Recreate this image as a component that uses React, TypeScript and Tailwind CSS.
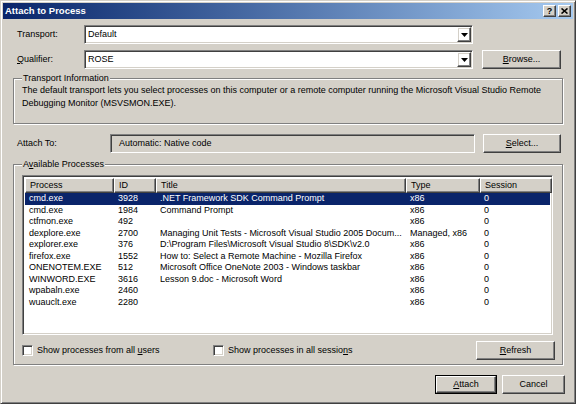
import * as React from "react";

const raised =
  "border border-t-white border-l-white border-r-[#404040] border-b-[#404040] shadow-[inset_-1px_-1px_0_#808080,inset_1px_1px_0_#d4d0c8]";
const sunken =
  "border border-t-[#808080] border-l-[#808080] border-r-white border-b-white shadow-[inset_1px_1px_0_#404040,inset_-1px_-1px_0_#d4d0c8]";
const groupBox =
  "border border-[#808080] shadow-[inset_1px_1px_0_#fff,1px_1px_0_#fff]";

type Proc = {name: string; id: string; title: string; type: string; session: string};

const processes: Proc[] = [
  {name: "cmd.exe", id: "3928", title: ".NET Framework SDK Command Prompt", type: "x86", session: "0"},
  {name: "cmd.exe", id: "1984", title: "Command Prompt", type: "x86", session: "0"},
  {name: "ctfmon.exe", id: "492", title: "", type: "x86", session: "0"},
  {name: "dexplore.exe", id: "2700", title: "Managing Unit Tests - Microsoft Visual Studio 2005 Docum...", type: "Managed, x86", session: "0"},
  {name: "explorer.exe", id: "376", title: "D:\\Program Files\\Microsoft Visual Studio 8\\SDK\\v2.0", type: "x86", session: "0"},
  {name: "firefox.exe", id: "1552", title: "How to: Select a Remote Machine - Mozilla Firefox", type: "x86", session: "0"},
  {name: "ONENOTEM.EXE", id: "512", title: "Microsoft Office OneNote 2003 - Windows taskbar", type: "x86", session: "0"},
  {name: "WINWORD.EXE", id: "3616", title: "Lesson 9.doc - Microsoft Word", type: "x86", session: "0"},
  {name: "wpabaln.exe", id: "2460", title: "", type: "x86", session: "0"},
  {name: "wuauclt.exe", id: "2280", title: "", type: "x86", session: "0"},
];

const cols = "grid grid-cols-[89px_42px_250px_74px_72px]";

function Button({children, className = "", isDefault = false}: {children: React.ReactNode; className?: string; isDefault?: boolean}) {
  const inner = (
    <div className={`${raised} flex h-full w-full items-center justify-center`}>{children}</div>
  );
  if (isDefault) {
    return <div className={`border border-black ${className}`}>{inner}</div>;
  }
  return <div className={className}>{inner}</div>;
}

function ComboBox({value}: {value: string}) {
  return (
    <div className={`${sunken} flex h-[19px] w-[389px] items-stretch bg-white p-[1px]`}>
      <span className="flex-1 truncate pl-[2px] leading-[15px]">{value}</span>
      <div className={`${raised} flex w-[14px] items-center justify-center`}>
        <svg width="7" height="4" viewBox="0 0 7 4">
          <path d="M0 0h7L3.5 4z" fill="#000" />
        </svg>
      </div>
    </div>
  );
}

function Checkbox({label}: {label: React.ReactNode}) {
  return (
    <div className="flex items-center gap-[4px]">
      <div className={`${sunken} h-[11px] w-[11px] bg-white`} />
      <span>{label}</span>
    </div>
  );
}

export default function App() {
  return (
    <div className="h-[404px] w-[576px] bg-[#d4d0c8] font-['Liberation_Sans',Arial,sans-serif] text-[9px] text-black">
      <div className="flex h-full flex-col border border-t-[#d4d0c8] border-l-[#d4d0c8] border-r-[#404040] border-b-[#404040] p-[2px] shadow-[inset_1px_1px_0_#fff,inset_-1px_-1px_0_#808080]">
        {/* title bar */}
        <div className="flex h-[16px] items-center bg-linear-to-r from-[#0a246a] to-[#a6caf0] pl-[2px] pr-[2px]">
          <span className="flex-1 text-[9.5px] font-bold text-white">Attach to Process</span>
          <div className={`${raised} flex h-[12px] w-[13px] items-center justify-center bg-[#d4d0c8] text-[9px] font-bold leading-none`}>?</div>
          <div className={`${raised} ml-[2px] flex h-[12px] w-[13px] items-center justify-center bg-[#d4d0c8]`}>
            <svg width="7" height="6" viewBox="0 0 7 6">
              <path d="M0.5 0.5l6 5M6.5 0.5l-6 5" stroke="#000" strokeWidth="1.6" />
            </svg>
          </div>
        </div>

        {/* transport */}
        <div className="mt-[6px] flex items-center pl-[14px]">
          <span className="w-[67px]">Transport:</span>
          <ComboBox value="Default" />
        </div>
        <div className="mt-[6px] flex items-center pl-[14px]">
          <span className="w-[67px]">
            <u>Q</u>ualifier:
          </span>
          <ComboBox value="ROSE" />
          <Button className="ml-[9px] h-[19px] w-[79px]">
            <span>
              <u>B</u>rowse...
            </span>
          </Button>
        </div>

        <fieldset className={`${groupBox} ml-[10px] mt-[4px] h-[51px] w-[550px] pl-[8px] pr-[4px]`}>
          <legend className="bg-[#d4d0c8] px-[1px] leading-[11px]">Transport Information</legend>
          <p className="leading-[13px]">
            The default transport lets you select processes on this computer or a remote computer running the Microsoft Visual Studio Remote
            Debugging Monitor (MSVSMON.EXE).
          </p>
        </fieldset>

        {/* attach to */}
        <div className="mt-[10px] flex items-center pl-[14px]">
          <span className="w-[93px]">Attach To:</span>
          <div className={`${sunken} flex h-[19px] w-[365px] items-center pl-[8px]`}>Automatic: Native code</div>
          <Button className="ml-[8px] h-[19px] w-[78px]">
            <span>
              <u>S</u>elect...
            </span>
          </Button>
        </div>

        <fieldset className={`${groupBox} ml-[10px] mt-[6px] flex h-[206px] w-[550px] flex-col pl-[8px]`}>
          <legend className="bg-[#d4d0c8] px-[1px] leading-[11px]">
            A<u>v</u>ailable Processes
          </legend>
          <div className={`${sunken} mt-[5px] h-[160px] w-[531px] overflow-hidden bg-white p-[2px]`}>
            <div className={cols}>
              {["Process", "ID", "Title", "Type", "Session"].map((h) => (
                <div key={h} className={`${raised} h-[15px] bg-[#d4d0c8] pl-[4px] leading-[13px]`}>
                  {h}
                </div>
              ))}
            </div>
            {processes.map((p, i) => (
              <div
                key={p.name + p.id}
                className={`${cols} h-[11.5px] leading-[11.5px] ${i === 0 ? "bg-[#0a246a] text-white" : ""}`}
              >
                <span className="truncate pl-[4px]">{p.name}</span>
                <span className="truncate pl-[4px]">{p.id}</span>
                <span className="truncate pl-[4px]">{p.title}</span>
                <span className="truncate pl-[4px]">{p.type}</span>
                <span className="truncate pl-[4px]">{p.session}</span>
              </div>
            ))}
          </div>
          <div className="mt-[6px] flex w-[533px] items-center">
            <div className="w-[191px]">
              <Checkbox
                label={
                  <>
                    Show processes from all <u>u</u>sers
                  </>
                }
              />
            </div>
            <Checkbox
              label={
                <>
                  Show processes in all sessio<u>n</u>s
                </>
              }
            />
            <Button className="ml-auto h-[19px] w-[79px]">
              <span>
                <u>R</u>efresh
              </span>
            </Button>
          </div>
        </fieldset>

        {/* bottom buttons */}
        <div className="mt-[10px] flex justify-end gap-[5px] pr-[8px]">
          <Button isDefault className="h-[19px] w-[62px]">
            <span>
              <u>A</u>ttach
            </span>
          </Button>
          <Button className="h-[19px] w-[63px]">Cancel</Button>
        </div>
      </div>
    </div>
  );
}
